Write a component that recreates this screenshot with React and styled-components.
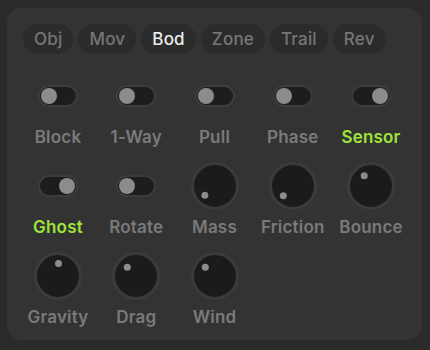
import * as React from "react";
import styled, { createGlobalStyle } from "styled-components";

const GlobalStyle = createGlobalStyle`
  html, body {
    margin: 0;
    padding: 0;
    background: #2a2a2a;
  }
  body {
    font-family: Inter, "Noto Sans", sans-serif;
  }
`;

const Page = styled.div`
  padding: 8px 8px 10px 7px;
`;

const Panel = styled.div`
  width: 415px;
  box-sizing: border-box;
  padding: 16px 16px 13px;
  background: #333333;
  border-radius: 14px;
`;

const Tabs = styled.div`
  display: flex;
  gap: 5px;
  margin-bottom: 18px;
`;

const Tab = styled.button`
  height: 30px;
  padding: 0 11px;
  border: none;
  border-radius: 15px;
  background: #2b2b2b;
  color: ${(p) => (p.$active ? "#ececec" : "#767676")};
  font-family: inherit;
  font-size: 17px;
  font-weight: 500;
  letter-spacing: 0.2px;
  cursor: pointer;
`;

const Grid = styled.div`
  display: grid;
  grid-template-columns: repeat(5, 70px);
  column-gap: 8.25px;
  row-gap: 15px;
`;

const Cell = styled.div`
  display: flex;
  flex-direction: column;
  align-items: center;
`;

const Slot = styled.div`
  height: 48px;
  display: flex;
  align-items: center;
  justify-content: center;
`;

const Label = styled.div`
  margin-top: 7px;
  line-height: 20px;
  font-size: 17px;
  font-weight: 600;
  letter-spacing: 0.2px;
  white-space: nowrap;
  color: ${(p) => (p.$on ? "#9fe33a" : "#7a7a7a")};
`;

const Track = styled.div`
  width: 40px;
  height: 22px;
  box-sizing: border-box;
  border: 2px solid #3c3c3c;
  border-radius: 11px;
  background: #1d1d1d;
  display: flex;
  align-items: center;
  justify-content: ${(p) => (p.$on ? "flex-end" : "flex-start")};
  padding: 0 1px;
`;

const Thumb = styled.div`
  width: 16px;
  height: 16px;
  border-radius: 50%;
  background: #8c8c8c;
`;

const Dial = styled.div`
  position: relative;
  width: 48px;
  height: 48px;
  box-sizing: border-box;
  border: 3px solid #3b3b3b;
  border-radius: 50%;
  background: #1b1b1b;
`;

const Dot = styled.div`
  position: absolute;
  left: 50%;
  top: 50%;
  width: 7px;
  height: 7px;
  margin: -3.5px 0 0 -3.5px;
  border-radius: 50%;
  background: #8c8c8c;
`;

function Toggle({ on }) {
  return (
    <Track $on={on}>
      <Thumb />
    </Track>
  );
}

function Knob({ angle }) {
  const r = 13;
  const a = (angle * Math.PI) / 180;
  const x = r * Math.sin(a);
  const y = -r * Math.cos(a);
  return (
    <Dial>
      <Dot style={{ transform: `translate(${x}px, ${y}px)` }} />
    </Dial>
  );
}

const tabs = ["Obj", "Mov", "Bod", "Zone", "Trail", "Rev"];

const controls = [
  { label: "Block", type: "toggle", on: false },
  { label: "1-Way", type: "toggle", on: false },
  { label: "Pull", type: "toggle", on: false },
  { label: "Phase", type: "toggle", on: false },
  { label: "Sensor", type: "toggle", on: true },
  { label: "Ghost", type: "toggle", on: true },
  { label: "Rotate", type: "toggle", on: false },
  { label: "Mass", type: "knob", angle: -132 },
  { label: "Friction", type: "knob", angle: -135 },
  { label: "Bounce", type: "knob", angle: -34 },
  { label: "Gravity", type: "knob", angle: 0 },
  { label: "Drag", type: "knob", angle: -45 },
  { label: "Wind", type: "knob", angle: -45 },
];

export default function App() {
  return (
    <>
      <GlobalStyle />
      <Page>
        <Panel>
          <Tabs>
            {tabs.map((t) => (
              <Tab key={t} $active={t === "Bod"}>
                {t}
              </Tab>
            ))}
          </Tabs>
          <Grid>
            {controls.map((c) => (
              <Cell key={c.label}>
                <Slot>
                  {c.type === "toggle" ? <Toggle on={c.on} /> : <Knob angle={c.angle} />}
                </Slot>
                <Label $on={c.type === "toggle" && c.on}>{c.label}</Label>
              </Cell>
            ))}
          </Grid>
        </Panel>
      </Page>
    </>
  );
}
